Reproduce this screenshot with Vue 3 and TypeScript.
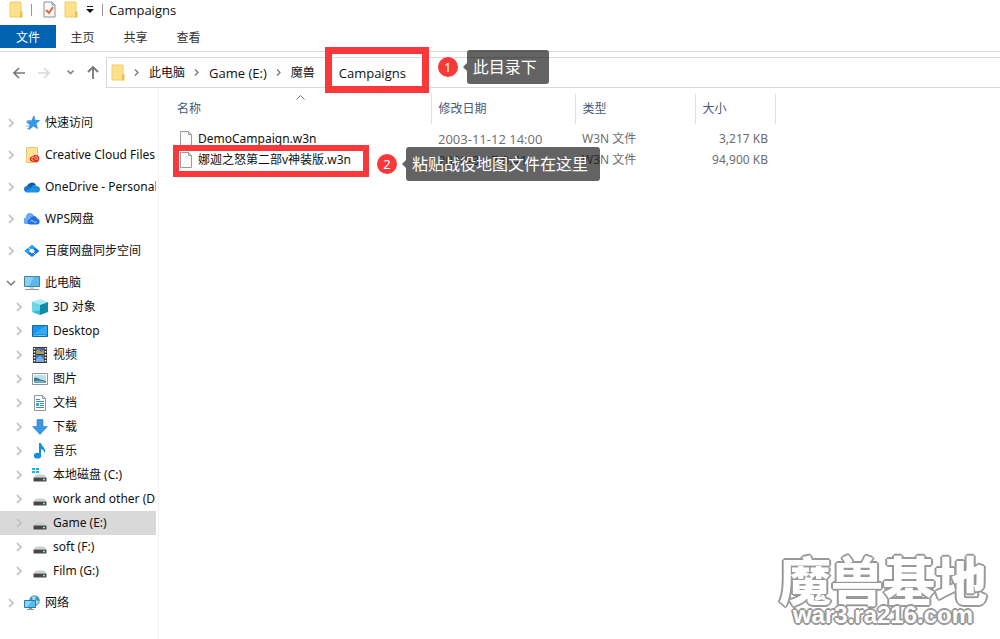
<script setup lang="ts">
import { ref } from 'vue'

interface TreeNode {
  label: string
  icon: string
  level: number
  open?: boolean
  gap?: boolean
}

interface FileRow {
  name: string
  date: string
  type: string
  size: string
}

const tabs = ['主页', '共享', '查看']
const crumbs = ['此电脑', 'Game (E:)', '魔兽']

const tree: TreeNode[] = [
  { label: '快速访问', icon: 'star', level: 0 },
  { label: 'Creative Cloud Files', icon: 'cc', level: 0, gap: true },
  { label: 'OneDrive - Personal', icon: 'onedrive', level: 0, gap: true },
  { label: 'WPS网盘', icon: 'wps', level: 0, gap: true },
  { label: '百度网盘同步空间', icon: 'baidu', level: 0, gap: true },
  { label: '此电脑', icon: 'pc', level: 0, open: true, gap: true },
  { label: '3D 对象', icon: 'cube', level: 1 },
  { label: 'Desktop', icon: 'desktop', level: 1 },
  { label: '视频', icon: 'video', level: 1 },
  { label: '图片', icon: 'picture', level: 1 },
  { label: '文档', icon: 'document', level: 1 },
  { label: '下载', icon: 'download', level: 1 },
  { label: '音乐', icon: 'music', level: 1 },
  { label: '本地磁盘 (C:)', icon: 'system', level: 1 },
  { label: 'work and other (D:)', icon: 'drive', level: 1 },
  { label: 'Game (E:)', icon: 'drive', level: 1 },
  { label: 'soft (F:)', icon: 'drive', level: 1 },
  { label: 'Film (G:)', icon: 'drive', level: 1 },
  { label: '网络', icon: 'network', level: 0, gap: true },
]

const files: FileRow[] = [
  { name: 'DemoCampaign.w3n', date: '2003-11-12 14:00', type: 'W3N 文件', size: '3,217 KB' },
  { name: '娜迦之怒第二部v神装版.w3n', date: '2020-3-17 0:41', type: 'W3N 文件', size: '94,900 KB' },
]

const selected = ref('Game (E:)')
const isLatin = (text: string) => /^[\x20-\x7e]+$/.test(text)
</script>

<template>
  <div class="explorer">
    <header class="titlebar">
      <svg class="folder" viewBox="0 0 14 17" aria-hidden="true"><path d="M1 1h11v15H1z" fill="#fde08a" stroke="#efcd68" /><path d="M11 11l2.500-1v6.500H11z" fill="#ecc04c" /></svg>
      <i class="rule"></i>
      <button class="tool check" aria-label="属性">
        <svg width="13" height="17" viewBox="0 0 13 17"><path d="M1 1h8l3 3v12H1z" fill="#f8fafc" stroke="#8a929b" /><path d="M9 1v3h3" fill="none" stroke="#8a929b" /><path d="M3 9l3 3 4-6" fill="none" stroke="#e5663c" stroke-width="2" /></svg>
      </button>
      <button class="tool" aria-label="新建文件夹">
        <svg class="folder" viewBox="0 0 14 17"><path d="M1 1h11v15H1z" fill="#fde08a" stroke="#efcd68" /><path d="M11 11l2.500-1v6.500H11z" fill="#ecc04c" /></svg>
      </button>
      <button class="tool more" aria-label="自定义快速访问工具栏">
        <svg width="8" height="7" viewBox="0 0 8 7"><path d="M1 .5h6" stroke="#111" /><path d="M0 3h8L4 7z" fill="#111" /></svg>
      </button>
      <i class="rule"></i>
      <h1 class="latin">Campaigns</h1>
    </header>

    <nav class="ribbon">
      <button class="file">文件</button>
      <button v-for="t in tabs" :key="t">{{ t }}</button>
    </nav>

    <div class="navbar">
      <div class="arrows">
        <button aria-label="后退"><svg width="12" height="12" viewBox="0 0 12 12"><path d="M12 6H1M6 1L1 6l5 5" fill="none" stroke="#777" stroke-width="1.600" /></svg></button>
        <button aria-label="前进" disabled><svg width="12" height="12" viewBox="0 0 12 12"><path d="M0 6h11M6 1l5 5-5 5" fill="none" stroke="#d8d8d8" stroke-width="1.600" /></svg></button>
        <button class="recent" aria-label="最近浏览的位置"><svg width="7" height="5" viewBox="0 0 7 5"><path d="M.5.5l3 3 3-3" fill="none" stroke="#888" stroke-width="1.600" /></svg></button>
        <button aria-label="向上"><svg width="12" height="13" viewBox="0 0 12 13"><path d="M6 13V1M1 6l5-5 5 5" fill="none" stroke="#777" stroke-width="1.800" /></svg></button>
      </div>
      <div class="address">
        <svg class="folder" viewBox="0 0 14 17" aria-hidden="true"><path d="M1 1h11v15H1z" fill="#fde08a" stroke="#efcd68" /><path d="M11 11l2.500-1v6.500H11z" fill="#ecc04c" /></svg>
        <template v-for="c in crumbs" :key="c">
          <svg class="sep" viewBox="0 0 5 7" aria-hidden="true"><path d="M1 .5l3 3-3 3" fill="none" stroke="#777" stroke-width="1.300" /></svg>
          <a href="#" :class="{ latin: isLatin(c) }">{{ c }}</a>
        </template>
        <svg class="sep" viewBox="0 0 5 7" aria-hidden="true"><path d="M1 .5l3 3-3 3" fill="none" stroke="#777" stroke-width="1.300" /></svg>
        <span class="current">
          <a href="#" class="latin">Campaigns</a>
          <span class="mark mark-path"></span>
          <span class="note note-path"><b>1</b><em>此目录下</em></span>
        </span>
      </div>
    </div>

    <div class="body">
      <aside class="sidebar">
        <button
          v-for="n in tree"
          :key="n.label"
          class="node"
          :class="{ child: n.level, gap: n.gap, selected: selected === n.label }"
          @click="selected = n.label"
        >
          <svg class="twist" viewBox="0 0 10 10" aria-hidden="true">
            <path v-if="n.open" d="M1 3l4 4 4-4" fill="none" stroke="#777" stroke-width="1.500" />
            <path v-else d="M3 1l4 4-4 4" fill="none" stroke="#bcbcbc" stroke-width="1.500" />
          </svg>
          <svg class="icon" viewBox="0 0 16 16" aria-hidden="true">
            <g v-if="n.icon === 'star'">
              <path d="M10 1l1 4.500 4.500 0-3.500 3 1.500 5-4-2.500-4.500 3.500 1-5-3.500-2.500 5-1z" fill="#2f9bea" stroke="#2383cf" stroke-width=".7" />
              <path d="M3 5.500h4M2 11h4M3 13.500h2" stroke="#6abbf2" />
            </g>
            <g v-else-if="n.icon === 'cc'">
              <path d="M2.500.5h11v15h-11z" fill="#fde39a" stroke="#e8c772" />
              <path d="M8.500 14.800a2.700 2.700 0 0 1 0-5.400c.8-1.200 2.200-1.700 3.600-1.400a3.600 3.600 0 0 1 .2 7.100z" fill="#e4251b" />
              <path d="M9.800 13.300a1.500 1.500 0 1 1 .2-2.700l2.300 2.300a1.700 1.700 0 1 0-1.800-2.700" fill="none" stroke="#fbe0b4" stroke-width=".9" />
            </g>
            <g v-else-if="n.icon === 'onedrive'">
              <path d="M3 7a5 5 0 0 1 9-1l-5 5z" fill="#0c59a4" />
              <path d="M0 10a3.500 3.500 0 0 1 5-3l6 6H3a3 3 0 0 1-3-3z" fill="#1278cf" />
              <path d="M7 8c2-3 5-2 5.500-1a3.300 3.300 0 0 1 3 5l-1.500 1z" fill="#1b8de0" />
              <path d="M1 12.500L8 8.500l7.500 3.500c-.5 1-1.500 1.500-2.500 1.500H3.500c-1 0-2-.4-2.500-1z" fill="#2391e0" />
            </g>
            <g v-else-if="n.icon === 'wps'">
              <path d="M2 6a4 4 0 0 1 7.500-2L12 6l-5 7H3a3.200 3.200 0 0 1-1-6.500z" fill="#6aa9f8" />
              <path d="M5.500 13.500a2.700 2.700 0 0 1 .5-5.300 4 4 0 0 1 7.500-.5 3 3 0 0 1 0 5.800z" fill="#2370e4" />
              <path d="M6.500 10.500c1-1.500 2.200-1 3 0s2 1.500 3 0" fill="none" stroke="#e6f1ff" />
            </g>
            <g v-else-if="n.icon === 'baidu'">
              <path d="M8 2l7.500 6L8 14 .5 8z" fill="#1479dc" />
              <path d="M.5 8L8 2l3 2.500L5 10z" fill="#25a4ee" />
              <path d="M8 5.500L11 8l-3 2.500L5 8z" fill="#fff" />
              <path d="M4 4l3 3M9 9l3 3" stroke="#fff" stroke-width=".8" />
            </g>
            <g v-else-if="n.icon === 'pc'">
              <path d="M.5 1.500h15v10H.5z" fill="#58b9ed" stroke="#4d7f9e" />
              <path d="M1 2h9L5 11H1z" fill="#87d1f7" />
              <path d="M6 12h4v2H6z" fill="#cbd5db" /><path d="M1 14.500h14" stroke="#8b989f" />
            </g>
            <g v-else-if="n.icon === 'cube'">
              <path d="M8 0l8 3-8 3-8-3z" fill="#a6edf4" /><path d="M0 3l8 3v10l-8-3z" fill="#36bbd3" /><path d="M16 3L8 6v10l8-3z" fill="#118ca6" />
              <path d="M0 3l8 3v5l-8 2z" fill="#69d7e7" />
            </g>
            <g v-else-if="n.icon === 'desktop'">
              <path d="M.5 2.500h15v11H.5z" fill="#1697ee" stroke="#1767a5" /><path d="M2 11L13 3h2v8z" fill="#38aaf4" /><path d="M2 12.500h2m1 0h9" stroke="#6cc2f8" />
            </g>
            <g v-else-if="n.icon === 'video'">
              <path d="M1 0h14v16H1z" fill="#343434" /><path d="M4 1h8v6H4z" fill="#506ba5" /><path d="M4 8h8v7H4z" fill="#3f80d0" />
              <path d="M4 4l3-2 2 3 3-2v4H4z" fill="#a3a352" /><path d="M4 12l4-3 4 4v2H4z" fill="#7fafe2" />
              <path d="M2.500 1v15M13.500 1v15" stroke="#fff" stroke-width="1.500" stroke-dasharray="1.500 1.500" />
            </g>
            <g v-else-if="n.icon === 'picture'">
              <path d="M.5 2.500h15v11H.5z" fill="#fff" stroke="#949494" /><path d="M2 4h12v8H2z" fill="#b9e0f3" /><path d="M2 7c4-1 5 2 12 3v2H2z" fill="#35758f" /><path d="M2 10c5-1 8 0 12 1v1H2z" fill="#75abc1" />
            </g>
            <g v-else-if="n.icon === 'document'">
              <path d="M2.500.5h8l3 3v12h-11z" fill="#fff" stroke="#8f989d" /><path d="M10.500.5v3h3" fill="none" stroke="#8f989d" />
              <path d="M4 4.500h4M4 6.500h8M8 8.500h4M8 10.500h4M4 12.500h8" stroke="#3b8abd" /><path d="M4 8h3v3H4z" fill="#39a2dd" />
            </g>
            <path v-else-if="n.icon === 'download'" d="M5 .5h6v7h4.500L8 15.500.5 7.500H5z" fill="#3b96df" stroke="#2c7fc5" stroke-width=".6" />
            <g v-else-if="n.icon === 'music'">
              <ellipse cx="5.500" cy="12.700" rx="3.600" ry="2.900" fill="#168de2" /><path d="M7 0h2c.3 3.500 6 5 3.500 10.500C12.300 7.500 11 6.300 9 6v7H7z" fill="#168de2" />
            </g>
            <g v-else-if="n.icon === 'drive' || n.icon === 'system'">
              <g v-if="n.icon === 'system'" fill="#20aee3"><path d="M0 1h3v2H0zM4 1h3v2H4zM0 4h3v2H0zM4 4h3v2H4z" /></g>
              <path d="M4 7.500h8l2.500 3h-13z" fill="#cfcfcf" /><path d="M1.500 10.500h13v4h-13z" fill="#444b47" /><path d="M11 12.500h2" stroke="#7cf5a0" stroke-width="1.500" />
            </g>
            <g v-else>
              <circle cx="10.500" cy="5.500" r="5.300" fill="#4895bc" /><path d="M8 1.500l4 0-1 3 4 2-2 3-4-2z" fill="#a7dbea" />
              <path d="M.5 5.500h11v7H.5z" fill="#57bbf0" stroke="#287aab" /><path d="M1 6h7l-5 6H1z" fill="#87d3fa" /><path d="M5 13h3v1H5zM3 14h7v1H3z" fill="#8399a5" />
            </g>
          </svg>
          <span class="label">{{ n.label }}</span>
        </button>
      </aside>

      <main class="content">
        <table>
          <colgroup><col class="c-name" /><col class="c-date" /><col class="c-type" /><col class="c-size" /></colgroup>
          <thead>
            <tr>
              <th>名称<svg class="sort" viewBox="0 0 9 5" aria-hidden="true"><path d="M.5 4.500l4-4 4 4" fill="none" stroke="#777" /></svg></th>
              <th>修改日期</th>
              <th>类型</th>
              <th>大小</th>
            </tr>
          </thead>
          <tbody>
            <tr v-for="(f, i) in files" :key="f.name">
              <td>
                <div class="name">
                  <svg width="12" height="16" viewBox="0 0 12 16" aria-hidden="true"><path d="M.5.5h8l3 3v12H.5z" fill="#fafafa" stroke="#9a9a9a" /><path d="M8.500.5v3h3" fill="none" stroke="#9a9a9a" /></svg>
                  <span>{{ f.name }}</span>
                  <template v-if="i === 1">
                    <span class="mark mark-file"></span>
                    <span class="note note-file"><b>2</b><em>粘贴战役地图文件在这里</em></span>
                  </template>
                </div>
              </td>
              <td class="latin">{{ f.date }}</td>
              <td>{{ f.type }}</td>
              <td class="size">{{ f.size }}</td>
            </tr>
          </tbody>
        </table>
      </main>
    </div>

    <div class="watermark">
      <strong>魔兽基地</strong>
      <span>war3.ra216.com</span>
    </div>
  </div>
</template>

<style>
body { margin: 0; background: #fff; }
</style>

<style scoped>
.explorer {
  position: relative;
  display: flex;
  flex-direction: column;
  min-height: 100vh;
  overflow: hidden;
  color: #111;
  font: 12px/16px "Noto Sans", "Noto Sans CJK SC", sans-serif;
}
.explorer * { box-sizing: border-box; }
button {
  padding: 0;
  border: 0;
  background: none;
  color: inherit;
  font: inherit;
}
a { color: inherit; text-decoration: none; }
svg { display: block; flex: none; }
.latin { font-family: "Open Sans", "Noto Sans", sans-serif; font-size: 13px; line-height: 14px; }
.folder { width: 14px; height: 17px; }

.titlebar {
  display: flex;
  align-items: center;
  height: 25px;
  padding: 0 0 6px 9px;
}
.titlebar h1 { margin: 0 0 0 6px; font-weight: 400; }
.rule { width: 1px; height: 12px; margin-left: 8px; background: #999; }
.tool { margin-left: 8px; }
.tool.check { margin-left: 11px; }
.more + .rule { margin-left: 8px; }

.ribbon {
  display: flex;
  height: 27px;
  padding-bottom: 3px;
  border-bottom: 1px solid #dadada;
}
.ribbon button { width: 53px; padding-top: 2px; color: #333; }
.ribbon .file { width: 56px; background: #0063b1; color: #fff; }

.navbar { display: flex; padding-top: 5px; }
.arrows { display: flex; align-items: center; justify-content: space-between; width: 106px; padding: 0 7px 0 13px; }
.recent { margin-left: 5px; }
.address {
  display: flex;
  flex: 1;
  align-items: center;
  height: 31px;
  padding-left: 4px;
  border: 1px solid #d9d9d9;
  border-right: 0;
}
.sep { width: 5px; height: 7px; margin: 0 10px 0 9px; }
.current { position: relative; display: flex; }

.mark { position: absolute; border: 7px solid #fa383a; pointer-events: none; }
.mark-path { top: -19px; left: -14px; width: 104px; height: 46px; }
.mark-file { top: -4px; left: -4px; width: 196px; height: 32px; border-width: 6px; }
.note { position: absolute; z-index: 2; display: flex; align-items: center; white-space: nowrap; }
.note b {
  width: 20px;
  height: 20px;
  margin-right: 9px;
  border-radius: 50%;
  background: #fa383a;
  color: #fff;
  font-size: 13px;
  font-weight: 400;
  line-height: 20px;
  text-align: center;
}
.note em {
  position: relative;
  padding: 0 12px 0 6px;
  border-radius: 3px;
  background: rgba(0, 0, 0, .61);
  color: #fff;
  font-size: 16px;
  font-style: normal;
  line-height: 34px;
}
.note em::before {
  position: absolute;
  top: 13px;
  left: -4px;
  border: solid transparent;
  border-width: 4px 4px 4px 0;
  border-right-color: rgba(0, 0, 0, .61);
  content: "";
}
.note-path { top: -16px; left: 99px; }
.note-file { top: -2px; left: 200px; }

.body { display: flex; flex: 1; }
.sidebar { width: 159px; padding: 23px 2px 0 0; border-right: 1px solid #f2f2f2; }
.node { display: flex; align-items: center; width: 156px; height: 24px; padding-left: 6px; text-align: left; }
.node.gap { margin-top: 8px; }
.node.child { padding-left: 14px; }
.node.selected { background: #d9d9d9; }
.twist { width: 10px; height: 10px; }
.icon { width: 16px; height: 16px; margin: 0 5px 0 8px; }
.label { flex: 1; overflow: hidden; white-space: nowrap; }

.content { flex: 1; min-width: 0; padding: 6px 0 0 11px; }
table { width: 605px; border-collapse: collapse; table-layout: fixed; }
.c-name { width: 261px; }
.c-date { width: 144px; }
.c-type { width: 120px; }
.c-size { width: 80px; }
th {
  position: relative;
  height: 30px;
  padding: 0 7px;
  border-right: 1px solid #e0e0e0;
  color: #44597a;
  font-weight: 400;
  text-align: left;
}
.sort { position: absolute; top: 1px; left: 50%; width: 9px; height: 5px; margin-left: -4px; }
tbody::before { display: block; height: 4px; content: ""; }
td { height: 21px; padding: 0 7px; color: #6d6d6d; white-space: nowrap; }
.size { text-align: right; }
.name { position: relative; display: flex; align-items: center; gap: 6px; height: 21px; padding-left: 3px; color: #111; }

.watermark {
  position: absolute;
  right: 13px;
  bottom: 12px;
  display: flex;
  flex-direction: column;
  align-items: center;
  color: #fff;
  text-shadow: 2px 0 #999, -2px 0 #999, 0 2px #999, 0 -2px #999, 1px 1px #999, -1px 1px #999, 1px -1px #999, -1px -1px #999;
}
.watermark strong {
  font: 900 52px/48px "Noto Sans CJK SC", sans-serif;
}
.watermark span { font: 700 24px/24px "Liberation Sans", sans-serif; }
</style>
